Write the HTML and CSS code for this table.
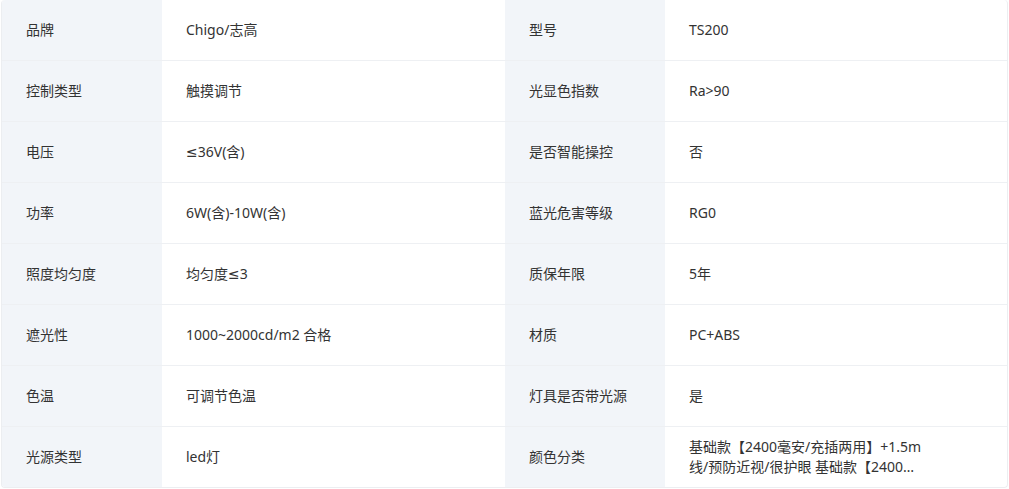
FILE: index.html
```html
<!DOCTYPE html>
<html lang="zh">
<head>
<meta charset="utf-8">
<link rel="stylesheet" href="styles.css">
</head>
<body>
<div class="spec">
  <div class="row">
    <div class="label">品牌</div><div class="value">Chigo/志高</div>
    <div class="label">型号</div><div class="value">TS200</div>
  </div>
  <div class="row">
    <div class="label">控制类型</div><div class="value">触摸调节</div>
    <div class="label">光显色指数</div><div class="value">Ra&gt;90</div>
  </div>
  <div class="row">
    <div class="label">电压</div><div class="value">≤36V(含)</div>
    <div class="label">是否智能操控</div><div class="value">否</div>
  </div>
  <div class="row">
    <div class="label">功率</div><div class="value">6W(含)-10W(含)</div>
    <div class="label">蓝光危害等级</div><div class="value">RG0</div>
  </div>
  <div class="row">
    <div class="label">照度均匀度</div><div class="value">均匀度≤3</div>
    <div class="label">质保年限</div><div class="value">5年</div>
  </div>
  <div class="row">
    <div class="label">遮光性</div><div class="value">1000~2000cd/m2 合格</div>
    <div class="label">材质</div><div class="value">PC+ABS</div>
  </div>
  <div class="row">
    <div class="label">色温</div><div class="value">可调节色温</div>
    <div class="label">灯具是否带光源</div><div class="value">是</div>
  </div>
  <div class="row last">
    <div class="label">光源类型</div><div class="value">led灯</div>
    <div class="label">颜色分类</div><div class="value"><span class="clamp">基础款【2400毫安/充插两用】+1.5m线/预防近视/很护眼 基础款【2400毫安/充插两用】+1.5m线/预防近视/很护眼</span></div>
  </div>
</div>
</body>
</html>
```

FILE: styles.css
```css
* { box-sizing: border-box; }
html, body { margin: 0; padding: 0; background: #fff; }
body {
  padding: 0 1px;
  font-family: "Noto Sans", "DejaVu Sans", "Noto Sans CJK SC", sans-serif;
  font-size: 14px;
  color: #333;
}
.spec {
  width: 1007px;
  border: 1px solid #eceef1;
  border-top: none;
  border-radius: 4px;
  overflow: hidden;
}
.row {
  display: grid;
  grid-template-columns: 160px 343px 160px 1fr;
  height: 61px;
  border-bottom: 1px solid #eef0f3;
}
.row.last { border-bottom: none; height: 60px; }
.label, .value {
  display: flex;
  align-items: center;
  padding: 0 24px;
  line-height: 20px;
}
.label { background: #f2f5f9; }
.clamp {
  max-width: 236px;
  display: -webkit-box;
  -webkit-line-clamp: 2;
  -webkit-box-orient: vertical;
  overflow: hidden;
  word-break: break-all;
}
```
